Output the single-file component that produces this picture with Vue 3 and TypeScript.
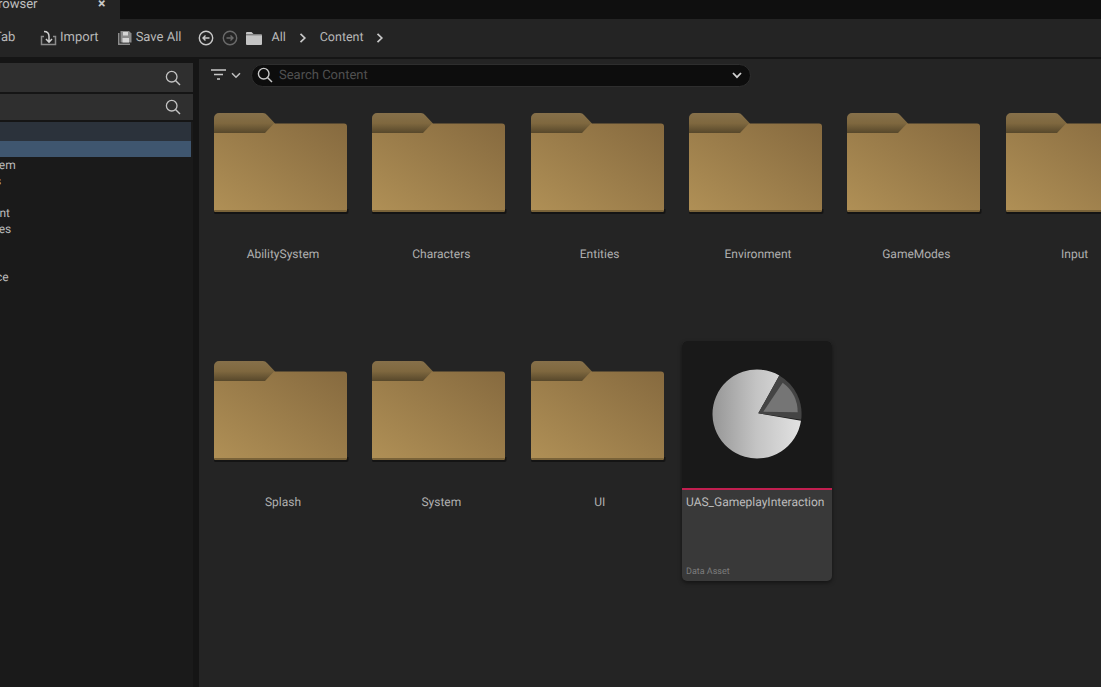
<script setup lang="ts">
const folders = ['AbilitySystem', 'Characters', 'Entities', 'Environment', 'GameModes', 'Input', 'Splash', 'System', 'UI']
const tree = [
  { name: 'AbilitySystem', indented: false },
  { name: 'Characters', indented: false },
  { name: 'Entities', indented: false },
  { name: 'Environment', indented: false },
  { name: 'GameModes', indented: false },
  { name: 'Input', indented: false },
  { name: 'Splash', indented: false },
  { name: 'Interface', indented: true },
]
</script>

<template>
  <div class="app">
    <div class="tabbar">
      <div class="tab">
        <span class="tab-title">Content Browser</span>
        <span class="tab-close">×</span>
      </div>
    </div>
    <div class="toolbar">
      <span class="tb-clip tb-label">Tab</span>
      <svg class="ic import" viewBox="0 0 18 16" width="18" height="16">
        <path d="M4 6.500H1.500v8h14v-8H13" fill="none" stroke="#8c8c8c" stroke-width="1.500" />
        <path d="M4 1.500c3.500 0 5 2 5 5V12M6 9l3 3.200L12 9" fill="none" stroke="#d0d0d0" stroke-width="1.500" />
      </svg>
      <span class="tb-label import-l">Import</span>
      <svg class="ic save" viewBox="0 0 14 14" width="14" height="14">
        <path d="M0 2h1.500v10.500H12V14H0z" fill="#8c8c8c" />
        <path d="M2.500 0H11l2.500 2.500V11.500H2.500z" fill="#8c8c8c" />
        <path d="M5 1h5v3.500H5z" fill="#d6d6d6" />
        <path d="M4.500 7h6.500v4.500H4.500z" fill="#d6d6d6" />
      </svg>
      <span class="tb-label save-l">Save All</span>
      <svg class="nav back" viewBox="0 0 16 16" width="16" height="16">
        <circle cx="8" cy="8" r="6.700" fill="none" stroke="#c8c8c8" stroke-width="1.400" />
        <path d="M11.500 8H5M7.500 5.500 5 8l2.500 2.500" fill="none" stroke="#c8c8c8" stroke-width="1.400" />
      </svg>
      <svg class="nav fwd" viewBox="0 0 16 16" width="16" height="16">
        <circle cx="8" cy="8" r="6.700" fill="none" stroke="#6a6a6a" stroke-width="1.400" />
        <path d="M4.500 8H11M8.500 5.500 11 8l-2.500 2.500" fill="none" stroke="#6a6a6a" stroke-width="1.400" />
      </svg>
      <svg class="crumb-folder" viewBox="0 0 16 13" width="16" height="13">
        <path d="M0 1a1 1 0 0 1 1-1h4.500l2 2H15a1 1 0 0 1 1 1v9a1 1 0 0 1-1 1H1a1 1 0 0 1-1-1z" fill="#c4c4c4" />
        <path d="M0 2.800h16" stroke="#242424" stroke-width=".6" />
      </svg>
      <span class="tb-label crumb crumb-all">All</span>
      <svg class="chev c1" viewBox="0 0 8 10" width="8" height="10"><path d="M1.500 .8 5.800 5 1.500 9.200" fill="none" stroke="#c8c8c8" stroke-width="1.700" /></svg>
      <span class="tb-label crumb crumb-content">Content</span>
      <svg class="chev c2" viewBox="0 0 8 10" width="8" height="10"><path d="M1.500 .8 5.800 5 1.500 9.200" fill="none" stroke="#c8c8c8" stroke-width="1.700" /></svg>
    </div>
    <div class="main">
      <aside class="side">
        <div class="side-search first">
          <svg viewBox="0 0 16 16" width="16" height="16"><circle cx="6.700" cy="6.700" r="5.300" fill="none" stroke="#c4c4c4" stroke-width="1.300" /><path d="m10.500 10.500 4.500 4.500" stroke="#c4c4c4" stroke-width="1.400" /></svg>
        </div>
        <div class="side-search second">
          <svg viewBox="0 0 16 16" width="16" height="16"><circle cx="6.700" cy="6.700" r="5.300" fill="none" stroke="#c4c4c4" stroke-width="1.300" /><path d="m10.500 10.500 4.500 4.500" stroke="#c4c4c4" stroke-width="1.400" /></svg>
        </div>
        <div class="tree">
          <div class="row-all"></div>
          <div class="row-content"></div>
          <div v-for="t in tree" :key="t.name" class="tree-row" :class="{ indented: t.indented }"><span>{{ t.name }}</span></div>
        </div>
      </aside>
      <section class="content">
        <div class="filterbar">
          <svg class="filter" viewBox="0 0 15 12" width="15" height="12">
            <path d="M0 1h15M3 5.500h9M6 10h3" stroke="#c8c8c8" stroke-width="1.600" />
          </svg>
          <svg class="filter-caret" viewBox="0 0 10 7" width="10" height="7"><path d="M1 1.200 5 5.200 9 1.200" fill="none" stroke="#c0c0c0" stroke-width="1.500" /></svg>
          <div class="searchbox">
            <svg viewBox="0 0 16 16" width="16" height="16"><circle cx="6.700" cy="6.700" r="5.300" fill="none" stroke="#c8c8c8" stroke-width="1.400" /><path d="m10.500 10.500 4.500 4.500" stroke="#c8c8c8" stroke-width="1.500" /></svg>
            <span class="placeholder">Search Content</span>
            <svg class="search-caret" viewBox="0 0 10 7" width="10" height="7"><path d="M1 1 5 5.200 9 1" fill="none" stroke="#d0d0d0" stroke-width="1.800" /></svg>
          </div>
        </div>
        <div class="grid">
          <div v-for="f in folders" :key="f" class="tile">
            <svg class="folder" viewBox="0 0 136 103" width="136" height="103">
              <defs>
                <linearGradient id="front" x1="0" y1="1" x2="1" y2="0">
                  <stop offset="0" stop-color="#b09056" />
                  <stop offset="1" stop-color="#866a3f" />
                </linearGradient>
                <linearGradient id="back" x1="0" y1="0" x2="0" y2="1">
                  <stop offset="0" stop-color="#86704a" />
                  <stop offset=".5" stop-color="#7f683f" />
                  <stop offset="1" stop-color="#55462a" />
                </linearGradient>
              </defs>
              <path d="M0 5a5 5 0 0 1 5-5h44a5 5 0 0 1 4 2l8 8.500-8 10H0z" fill="url(#back)" />
              <path d="M1 101h132a2 2 0 0 0 1.500-2v-3H0v3a2 2 0 0 0 1 2z" fill="#141414" />
              <path d="M0 20h51l9-9.500h70a3 3 0 0 1 3 3V97a2 2 0 0 1-2 2H2a2 2 0 0 1-2-2z" fill="url(#front)" />
              <path d="M0 97h133a2 2 0 0 1-2 2H2a2 2 0 0 1-2-2z" fill="#7a6339" />
            </svg>
            <div class="folder-label">{{ f }}</div>
          </div>
          <div class="card">
            <div class="card-thumb">
              <svg viewBox="0 0 90 90" width="90" height="90">
                <defs>
                  <linearGradient id="pie" x1="0" y1="0" x2="1" y2="0">
                    <stop offset="0" stop-color="#969696" />
                    <stop offset=".5" stop-color="#c4c4c4" />
                    <stop offset="1" stop-color="#e2e2e2" />
                  </linearGradient>
                </defs>
                <path d="M46.300 44.300 89 51.700A44.500 44.500 0 1 1 67.300 6.500z" fill="url(#pie)" />
                <path d="M46.300 44.300 67.300 6.500A44.500 44.500 0 0 1 89.200 50.800z" fill="#444444" />
                <path d="M51.300 42.700 70.700 13.700A37 37 0 0 1 85.700 43.300z" fill="#757575" />
              </svg>
            </div>
            <div class="card-body">
              <div class="card-name">UAS_GameplayInteraction</div>
              <div class="card-type">Data Asset</div>
            </div>
          </div>
        </div>
      </section>
    </div>
  </div>
</template>

<style>
html, body { margin: 0; background: #242424; overflow: hidden; }
</style>

<style scoped>
.app {
  width: 1101px;
  height: 687px;
  overflow: hidden;
  background: #242424;
  font-family: Roboto, "Liberation Sans", sans-serif;
  font-size: 12px;
  color: #c0c0c0;
  display: flex;
  flex-direction: column;
  text-rendering: geometricPrecision;
}
.tabbar { height: 19px; background: #0f0f0f; flex: none; overflow: hidden; }
.tab {
  width: 120px; height: 19px; background: #242424;
  display: flex; align-items: center; position: relative; overflow: hidden;
}
.tab-title { margin-left: -59px; margin-top: -10px; color: #c0c0c0; font-size: 13px; white-space: nowrap; }
.tab-close { position: absolute; left: 98px; top: -3px; font-size: 14px; color: #c8c8c8; font-weight: 700; line-height: 14px; }
.toolbar {
  height: 38px; flex: none; display: flex; align-items: center;
  background: #242424; overflow: hidden; font-size: 13px;
}
.tb-clip { margin-left: -6px; width: 46px; flex: none; }
.tb-label { white-space: nowrap; color: #b8b8b8; margin-bottom: 1px; }
.import { flex: none; }
.import-l { margin-left: 2px; }
.save { margin-left: 19px; flex: none; }
.save-l { margin-left: 4px; }
.back { margin-left: 17px; flex: none; }
.fwd { margin-left: 8px; flex: none; }
.crumb-folder { margin-left: 8px; flex: none; }
.crumb { font-size: 12.500px; }
.crumb-all { margin-left: 9px; }
.c1 { margin-left: 13px; flex: none; }
.crumb-content { margin-left: 13px; }
.c2 { margin-left: 12px; flex: none; }
.main { flex: 1; display: flex; border-top: 2px solid #151515; min-height: 0; }
.side {
  width: 193px; flex: none; background: #151515; display: flex; flex-direction: column;
  border-right: 6px solid #151515; overflow: hidden; padding-top: 3px;
}
.side-search {
  background: #2f2f2f; display: flex; align-items: center; justify-content: flex-end;
  padding-right: 12px; flex: none;
}
.first { height: 29px; margin-top: 1px; }
.second { height: 26px; margin-top: 2px; }
.tree { flex: 1; background: #1a1a1a; margin-top: 2px; overflow: hidden; }
.row-all { height: 19px; width: 191px; background: #2b323b; }
.row-content { height: 16px; width: 191px; background: #3f566f; }
.tree-row { height: 16px; line-height: 16px; margin-left: -57px; white-space: nowrap; color: #bcbcbc; }
.tree-row.indented { margin-left: -39px; }
.content { flex: 1; min-width: 0; background: #242424; overflow: hidden; }
.filterbar { height: 34px; display: flex; align-items: center; padding-bottom: 2px; box-sizing: border-box; }
.filter { margin-left: 12px; flex: none; }
.filter-caret { margin-left: 5px; flex: none; }
.searchbox {
  margin-left: 10px; width: 500px; height: 23px; box-sizing: border-box; flex: none;
  background: #0d0d0d; border: 1px solid #2e2e2e; border-radius: 12px;
  display: flex; align-items: center; padding: 0 8px 0 5px;
}
.placeholder { margin-left: 6px; color: #505050; flex: 1; font-size: 13px; }
.search-caret { flex: none; }
.grid {
  display: flex; flex-wrap: wrap; column-gap: 8.330px; row-gap: 8px;
  padding: 0 0 0 8px; width: 1000px;
}
.tile { width: 150px; height: 240px; flex: none; }
.folder { display: block; margin: 20px 0 0 7px; }
.folder-label { text-align: center; margin: 30px 0 0 2px; line-height: 16px; white-space: nowrap; color: #b0b0b0; }
.card {
  width: 150px; height: 240px; flex: none; border-radius: 5px; overflow: hidden;
  display: flex; flex-direction: column; box-shadow: 0 2px 4px rgba(0, 0, 0, .45);
  background: #393939;
}
.card-thumb {
  flex: none; background: #191919; border-bottom: 2px solid #c21f50;
  display: flex; align-items: flex-start; justify-content: center; padding-top: 28px; height: 119px;
}
.card-body { flex: 1; display: flex; flex-direction: column; justify-content: space-between; padding: 4px 4px 3px; }
.card-name { line-height: 16px; white-space: nowrap; color: #bcbcbc; }
.card-type { font-size: 9px; color: #7c7c7c; line-height: 12px; }
</style>
